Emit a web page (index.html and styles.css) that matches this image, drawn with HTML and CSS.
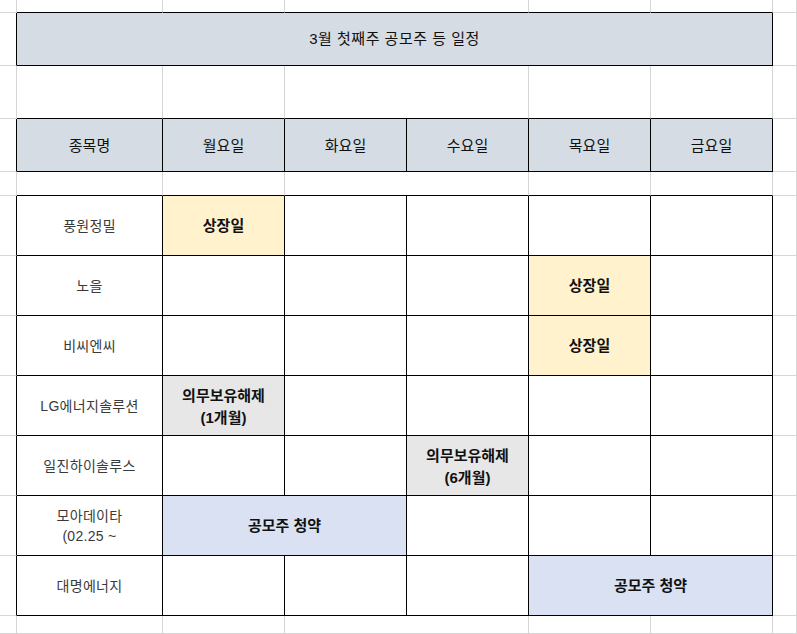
FILE: index.html
```html
<!DOCTYPE html>
<html lang="ko">
<head>
<meta charset="utf-8">
<title>3월 첫째주 공모주 등 일정</title>
<link rel="stylesheet" href="styles.css">
</head>
<body>
<div class="sheet">
  <!-- row 0 -->
  <div class="c"></div>
  <div class="c edge-b"></div>
  <div class="c edge-b"></div>
  <div class="c edge-b span2"></div>
  <div class="c edge-b"></div>
  <div class="c edge-b"></div>
  <div class="c"></div>

  <!-- row 1: title -->
  <div class="c edge-r"></div>
  <div class="c box head title span6">3월 첫째주 공모주 등 일정</div>
  <div class="c"></div>

  <!-- row 2 -->
  <div class="c"></div>
  <div class="c edge-b"></div>
  <div class="c edge-b"></div>
  <div class="c edge-b span2"></div>
  <div class="c edge-b"></div>
  <div class="c edge-b"></div>
  <div class="c"></div>

  <!-- row 3: header -->
  <div class="c edge-r"></div>
  <div class="c box head">종목명</div>
  <div class="c box head">월요일</div>
  <div class="c box head">화요일</div>
  <div class="c box head">수요일</div>
  <div class="c box head">목요일</div>
  <div class="c box head">금요일</div>
  <div class="c"></div>

  <!-- row 4 -->
  <div class="c"></div>
  <div class="c edge-b"></div>
  <div class="c edge-b"></div>
  <div class="c edge-b span2"></div>
  <div class="c edge-b"></div>
  <div class="c edge-b"></div>
  <div class="c"></div>

  <!-- 풍원정밀 -->
  <div class="c edge-r"></div>
  <div class="c box name">풍원정밀</div>
  <div class="c box ev listing">상장일</div>
  <div class="c box"></div>
  <div class="c box"></div>
  <div class="c box"></div>
  <div class="c box"></div>
  <div class="c"></div>

  <!-- 노을 -->
  <div class="c edge-r"></div>
  <div class="c box name">노을</div>
  <div class="c box"></div>
  <div class="c box"></div>
  <div class="c box"></div>
  <div class="c box ev listing">상장일</div>
  <div class="c box"></div>
  <div class="c"></div>

  <!-- 비씨엔씨 -->
  <div class="c edge-r"></div>
  <div class="c box name">비씨엔씨</div>
  <div class="c box"></div>
  <div class="c box"></div>
  <div class="c box"></div>
  <div class="c box ev listing">상장일</div>
  <div class="c box"></div>
  <div class="c"></div>

  <!-- LG에너지솔루션 -->
  <div class="c edge-r"></div>
  <div class="c box name">LG에너지솔루션</div>
  <div class="c box ev lockup">의무보유해제<br>(1개월)</div>
  <div class="c box"></div>
  <div class="c box"></div>
  <div class="c box"></div>
  <div class="c box"></div>
  <div class="c"></div>

  <!-- 일진하이솔루스 -->
  <div class="c edge-r"></div>
  <div class="c box name">일진하이솔루스</div>
  <div class="c box"></div>
  <div class="c box"></div>
  <div class="c box ev lockup">의무보유해제<br>(6개월)</div>
  <div class="c box"></div>
  <div class="c box"></div>
  <div class="c"></div>

  <!-- 모아데이타 -->
  <div class="c edge-r"></div>
  <div class="c box name">모아데이타<br>(02.25 ~</div>
  <div class="c box ev subscribe span2">공모주 청약</div>
  <div class="c box"></div>
  <div class="c box"></div>
  <div class="c box"></div>
  <div class="c"></div>

  <!-- 대명에너지 -->
  <div class="c edge-r"></div>
  <div class="c box name">대명에너지</div>
  <div class="c box"></div>
  <div class="c box"></div>
  <div class="c box"></div>
  <div class="c box ev subscribe span2">공모주 청약</div>
  <div class="c"></div>

  <!-- last row -->
  <div class="c"></div>
  <div class="c"></div>
  <div class="c"></div>
  <div class="c span2"></div>
  <div class="c"></div>
  <div class="c"></div>
  <div class="c"></div>
</div>
</body>
</html>
```
FILE: styles.css
```css
* { box-sizing: border-box; }

html, body {
  margin: 0;
  padding: 0;
  background: #ffffff;
}

body {
  font-family: "Liberation Sans", "Noto Sans CJK KR", sans-serif;
  font-size: 14px;
  color: #000;
}

.sheet {
  display: grid;
  width: 797px;
  height: 634px;
  overflow: hidden;
  grid-template-columns: 17px 146px 122px 122px 122px 122px 122px 24px;
  grid-template-rows: 13px 53px 53px 53px 24px repeat(7, 60px) 18px;
}

.c {
  border-right: 1px solid #d6d6d6;
  border-bottom: 1px solid #d6d6d6;
  display: flex;
  align-items: center;
  justify-content: center;
  text-align: center;
  min-width: 0;
}

.edge-b { border-bottom-color: #000; }
.edge-r { border-right-color: #000; }

.box {
  border-right-color: #000;
  border-bottom-color: #000;
}

.span2 { grid-column: span 2; }
.span6 { grid-column: span 6; }

.head {
  background: #d6dce4;
  font-size: 15px;
  color: #111;
  padding-bottom: 2px;
}

.title {
  letter-spacing: 0.5px;
  padding-bottom: 3px;
}

.name {
  font-size: 14px;
  letter-spacing: 0.3px;
  color: #3a3a3a;
  line-height: 20px;
}

.ev {
  font-weight: bold;
  font-size: 15px;
  line-height: 22px;
  color: #111;
}

.listing { background: #fff2cc; }
.lockup { background: #e7e7e7; padding-top: 3px; }
.subscribe { background: #d9e1f2; }
```
